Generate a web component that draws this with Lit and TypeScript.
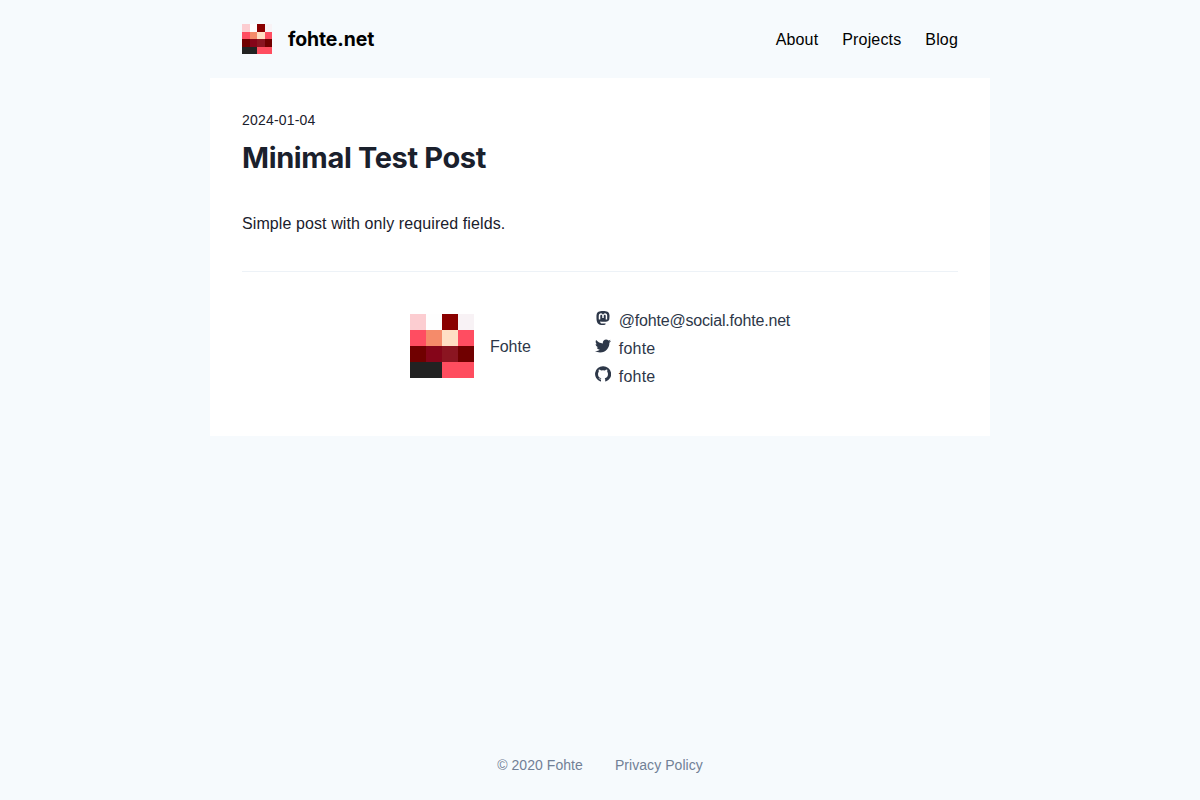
import { LitElement, html, css, svg } from "lit";
import { customElement } from "lit/decorators.js";

const CELLS: [number, number, number, number, string][] = [
  [0, 0, 1, 1, "#fccdd1"], [1, 0, 1, 1, "#fefefe"], [2, 0, 1, 1, "#8a0000"], [3, 0, 1, 1, "#f8f2f5"],
  [0, 1, 1, 1, "#ff4d61"], [1, 1, 1, 1, "#f58b6a"], [2, 1, 1, 1, "#ffdfc4"], [3, 1, 1, 1, "#ff4d61"],
  [0, 2, 1, 1, "#700000"], [1, 2, 1, 1, "#850519"], [2, 2, 1, 1, "#8b1521"], [3, 2, 1, 1, "#700000"],
  [0, 3, 2, 1, "#222222"], [2, 3, 2, 1, "#ff4d5f"],
];

const ICONS = {
  mastodon: { box: "-32 0 512 512", d: "M433 179.11c0-97.2-63.71-125.7-63.71-125.7-62.52-28.7-228.56-28.4-290.48 0 0 0-63.72 28.5-63.72 125.7 0 115.7-6.6 259.4 105.63 289.1 40.51 10.7 75.32 13 103.33 11.4 50.81-2.8 79.32-18.1 79.32-18.1l-1.7-36.9s-36.31 11.4-77.12 10.1c-40.41-1.4-83-4.4-89.63-54a102.54 102.54 0 0 1-.9-13.9c85.63 20.9 158.65 9.1 178.75 6.7 56.12-6.7 105-41.3 111.23-72.9 9.8-49.8 9-121.5 9-121.5zm-75.12 125.2h-46.63v-114.2c0-49.7-64-51.6-64 6.9v62.5h-46.33V197c0-58.5-64-56.6-64-6.9v114.2H90.19c0-122.1-5.2-147.9 18.41-175 25.9-28.9 79.82-30.8 103.83 6.1l11.6 19.5 11.6-19.5c24.11-37.1 78.12-34.8 103.83-6.1 23.71 27.3 18.4 53 18.4 175z" },
  twitter: { box: "0 0 512 512", d: "M459.37 151.716c.325 4.548.325 9.097.325 13.645 0 138.72-105.583 298.558-298.558 298.558-59.452 0-114.68-17.219-161.137-47.106 8.447.974 16.568 1.299 25.34 1.299 49.055 0 94.213-16.568 130.274-44.832-46.132-.975-84.792-31.188-98.112-72.772 6.498.974 12.995 1.624 19.818 1.624 9.421 0 18.843-1.3 27.614-3.573-48.081-9.747-84.143-51.98-84.143-102.985v-1.299c13.969 7.797 30.214 12.67 47.431 13.319-28.264-18.843-46.781-51.005-46.781-87.391 0-19.492 5.197-37.36 14.294-52.954 51.655 63.675 129.3 105.258 216.365 109.807-1.624-7.797-2.599-15.918-2.599-24.04 0-57.828 46.782-104.934 104.934-104.934 30.213 0 57.502 12.67 76.67 33.137 23.715-4.548 46.456-13.32 66.599-25.34-7.798 24.366-24.366 44.833-46.132 57.827 21.117-2.273 41.584-8.122 60.426-16.243-14.292 20.791-32.161 39.308-52.628 54.253z" },
  github: { box: "0 0 16 16", d: "M8 .2A7.8 7.8 0 0 0 5.4 15.4c.4.1.6-.1.6-.4v-1.600c-1.600.3-2.100-.6-2.500-1.300.9.3 1.300.9 2.600.6l.2-.5C4.300 11.900 3 10.900 3 8c0-1 .3-1.700.8-2.300-.2-.6-.2-1.400.1-2.100.8 0 1.500.4 2.200.9a7.500 7.500 0 0 1 3.800 0c.7-.5 1.400-.9 2.200-.9.3.7.3 1.500.1 2.100.5.6.8 1.300.8 2.300 0 2.900-1.300 3.900-3.300 4.200.3.3.5.8.5 1.400V15c0 .3.2.5.6.4A7.8 7.8 0 0 0 8 .2z" },
};

@customElement("pixel-avatar")
export class PixelAvatar extends LitElement {
  static styles = css`
    :host { display: block; flex: none; }
    .art { display: block; width: 100%; height: 100%; }
  `;
  render() {
    return html`<svg class="art" viewBox="0 0 4 4" shape-rendering="crispEdges">
      ${CELLS.map(([x, y, w, h, c]) => svg`<rect x=${x} y=${y} width=${w} height=${h} fill=${c}></rect>`)}
    </svg>`;
  }
}

@customElement("app-root")
export class AppRoot extends LitElement {
  static styles = css`
    :host {
      display: flex;
      flex-direction: column;
      box-sizing: border-box;
      min-height: 100vh;
      background: #f6fafd;
      color: #1a202c;
      font: 16px/24px "Liberation Sans", Arial, sans-serif;
    }
    a { color: inherit; text-decoration: none; }
    .header {
      display: flex;
      align-items: center;
      justify-content: space-between;
      box-sizing: border-box;
      width: 780px;
      height: 78px;
      margin: 0 auto;
      padding: 0 32px;
      color: #000;
    }
    .brand { display: flex; align-items: center; gap: 16px; font: 700 19.4px/30px Inter, sans-serif; letter-spacing: -0.08px; }
    .logo { width: 30px; height: 30px; }
    .nav { display: flex; gap: 24px; padding-top: 2px; letter-spacing: 0.16px; }
    .card {
      box-sizing: border-box;
      width: 780px;
      height: 358px;
      margin: 0 auto;
      padding: 32px;
      background: #fff;
    }
    .date { font-size: 14px; line-height: 21px; letter-spacing: 0.19px; }
    .title { margin: 8px 0 0; font: 700 29px/38px Inter, sans-serif; letter-spacing: -0.36px; }
    .body { margin: 35px 0 0; letter-spacing: 0.095px; }
    .author {
      display: flex;
      justify-content: center;
      align-items: center;
      gap: 64px;
      margin-top: 35px;
      padding-top: 36px;
      border-top: 1px solid #edf2f7;
      color: #2d3748;
    }
    .person { display: flex; align-items: center; gap: 16px; margin-top: -4px; }
    .name { padding-top: 2px; }
    .portrait { width: 64px; height: 64px; }
    .links { display: grid; gap: 4px; }
    .link { display: flex; gap: 8px; }
    .label { padding-top: 1px; line-height: 23px; letter-spacing: 0.2px; }
    .handle { letter-spacing: -0.19px; }
    .icon { display: block; width: 16px; height: 16px; margin-top: 2px; fill: currentColor; }
    .footer {
      display: flex;
      justify-content: center;
      gap: 32px;
      margin-top: auto;
      padding-bottom: 24px;
      color: #718096;
      font-size: 14px;
      line-height: 21px;
      letter-spacing: 0.06px;
    }
  `;

  private link(name: keyof typeof ICONS, label: string) {
    return html`<a class="link" href="#">
      <svg class="icon" viewBox=${ICONS[name].box}><path d=${ICONS[name].d}></path></svg>
      <span class="label ${name === "mastodon" ? "handle" : ""}">${label}</span>
    </a>`;
  }

  render() {
    return html`
      <header class="header">
        <a class="brand" href="#"><pixel-avatar class="logo"></pixel-avatar><span>fohte.net</span></a>
        <nav class="nav"><a href="#">About</a><a href="#">Projects</a><a href="#">Blog</a></nav>
      </header>
      <main class="card">
        <div class="date">2024-01-04</div>
        <h1 class="title">Minimal Test Post</h1>
        <p class="body">Simple post with only required fields.</p>
        <section class="author">
          <div class="person"><pixel-avatar class="portrait"></pixel-avatar><span class="name">Fohte</span></div>
          <div class="links">
            ${this.link("mastodon", "@fohte@social.fohte.net")}
            ${this.link("twitter", "fohte")}
            ${this.link("github", "fohte")}
          </div>
        </section>
      </main>
      <footer class="footer"><span>© 2020 Fohte</span><a href="#">Privacy Policy</a></footer>
    `;
  }
}
